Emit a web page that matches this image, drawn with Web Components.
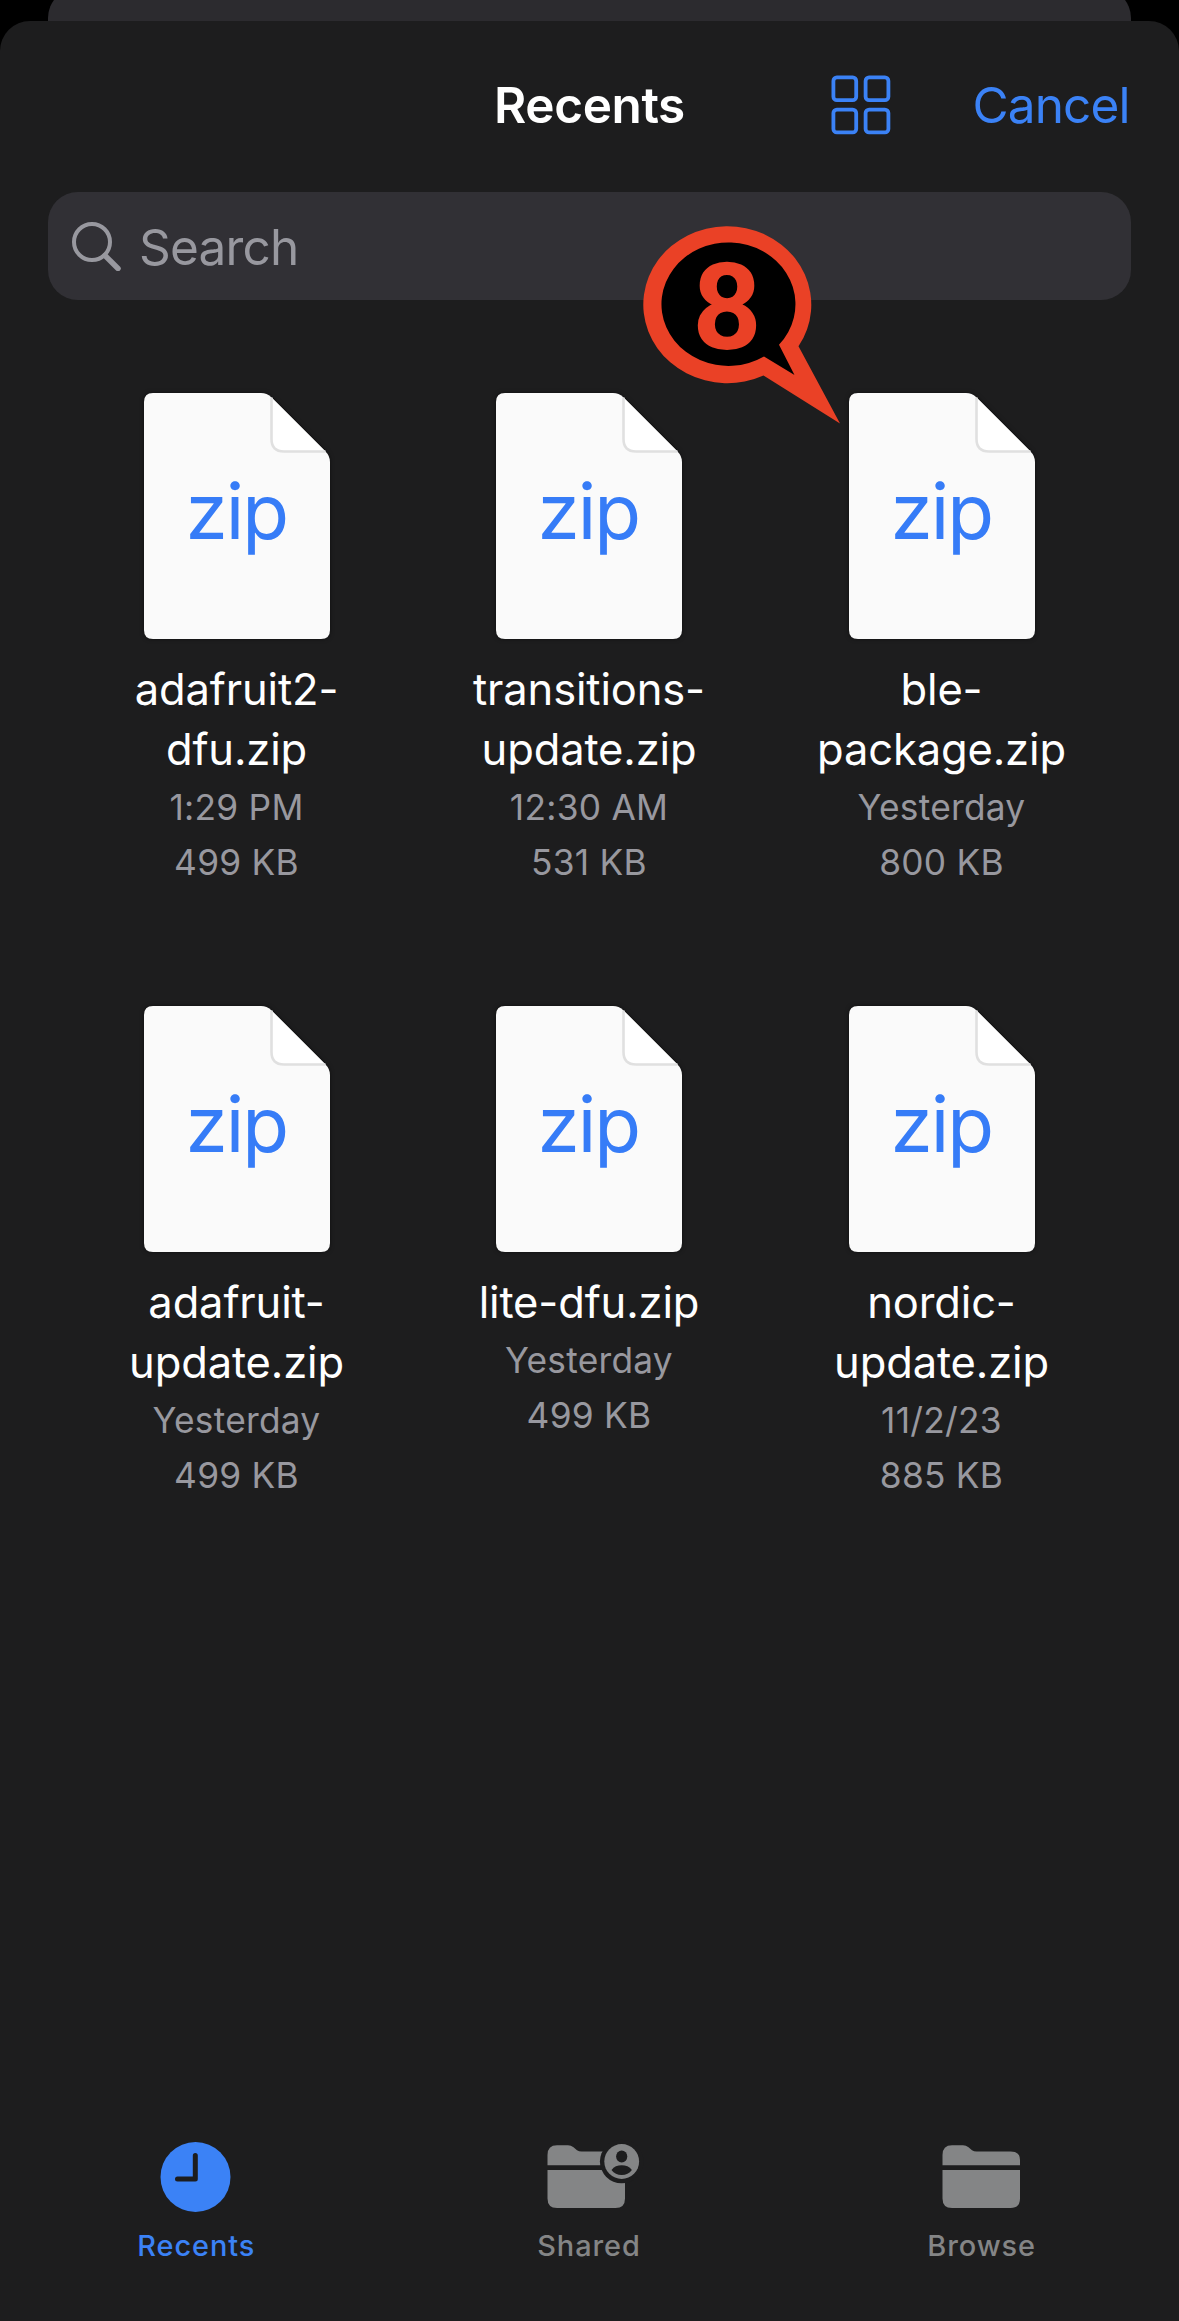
<!DOCTYPE html>
<html lang="en">
<head>
<meta charset="utf-8">
<title>Recents</title>
<style>
html, body { margin: 0; height: 100%; background: #000; }
body { font-family: Inter, "Liberation Sans", sans-serif; color: #fff; overflow: hidden; }
</style>
</head>
<body>
<file-picker>
  <nav-header slot="header" heading="Recents" action="Cancel"></nav-header>
  <search-field slot="header" label="Search"></search-field>
  <file-item name="adafruit2-dfu.zip" date="1:29 PM" size="499 KB"></file-item>
  <file-item name="transitions-update.zip" date="12:30 AM" size="531 KB"></file-item>
  <file-item name="ble-package.zip" date="Yesterday" size="800 KB"></file-item>
  <file-item name="adafruit-update.zip" date="Yesterday" size="499 KB"></file-item>
  <file-item name="lite-dfu.zip" date="Yesterday" size="499 KB"></file-item>
  <file-item name="nordic-update.zip" date="11/2/23" size="885 KB"></file-item>
  <tab-item slot="tabs" active label="Recents">
    <svg width="94" height="70" viewBox="0 0 94 70"><circle cx="46.5" cy="35" r="35" fill="currentColor"/><path d="M46.3 13.5V37H28.5" fill="none" stroke="#1d1d1e" stroke-width="5" stroke-linecap="round" stroke-linejoin="round"/></svg>
  </tab-item>
  <tab-item slot="tabs" label="Shared">
    <svg width="94" height="70" viewBox="0 0 94 70" style="overflow:visible"><path fill="currentColor" d="M5.500 23.300V13Q5.500 3.300 15 3.300H26Q29 3.300 31.500 5.200L35 8.200Q37 9.500 39.500 9.500H73.500Q83 9.500 83 18V23.300ZM5.500 28H83V56.500Q83 66 73.500 66H15Q5.500 66 5.500 56.500Z"/><circle cx="79.700" cy="19.500" r="21.800" fill="#1d1d1e"/><circle cx="79.700" cy="19.500" r="17.400" fill="currentColor"/><ellipse cx="79.700" cy="14.500" rx="5.600" ry="6" fill="#1d1d1e"/><path d="M69.500 28C72 24.500 75.500 23.300 79.700 23.300S87.400 24.500 89.900 28C87.400 31.500 84 33 79.700 33S72 31.500 69.500 28Z" fill="#1d1d1e"/></svg>
  </tab-item>
  <tab-item slot="tabs" label="Browse">
    <svg width="94" height="70" viewBox="0 0 94 70"><path fill="currentColor" d="M7.500 23.300V13Q7.500 3.300 17 3.300H28Q31 3.300 33.500 5.200L37 8.200Q39 9.500 41.500 9.500H75.500Q85 9.500 85 18V23.300ZM7.500 28H85V56.500Q85 66 75.500 66H17Q7.500 66 7.500 56.500Z"/></svg>
  </tab-item>
  <step-callout slot="overlay" number="8"></step-callout>
</file-picker>

<script>
class Base extends HTMLElement {
  connectedCallback() {
    if (this.shadowRoot) return;
    this.attachShadow({ mode: 'open' }).innerHTML = this.render();
  }
  get(name) { return this.getAttribute(name) || ''; }
}

customElements.define('file-picker', class extends Base {
  render() {
    return `<style>
      :host { display: flex; flex-direction: column; position: relative; width: 1179px; height: 2321px; background: #000; overflow: hidden; }
      .behind { height: 21px; margin: 0 48px; overflow: hidden; flex: none; }
      .behind div { height: 80px; margin-top: -12px; background: #2c2b2f; border-radius: 30px; }
      .sheet { flex: 1; display: flex; flex-direction: column; background: #1d1d1e; border-radius: 30px 30px 0 0; }
      .files { display: grid; grid-template-columns: repeat(3, 352.5px); grid-auto-rows: 612.500px; justify-content: center; padding: 93px 1px 0 0; flex: 1; align-content: start; }
      .tabs { display: grid; grid-template-columns: repeat(3, 1fr); height: 179px; margin-right: 1px; flex: none; }
    </style>
    <div class="behind"><div></div></div>
    <div class="sheet">
      <slot name="header"></slot>
      <div class="files"><slot></slot></div>
      <div class="tabs"><slot name="tabs"></slot></div>
    </div>
    <slot name="overlay"></slot>`;
  }
});

customElements.define('nav-header', class extends Base {
  render() {
    return `<style>
      :host { display: grid; grid-template-columns: 1fr auto 1fr; align-items: center; height: 168px; padding: 0 48px; flex: none; }
      h1 { grid-column: 2; margin: 0; font-size: 49.5px; font-weight: 600; letter-spacing: -0.4px; line-height: 60px; }
      .actions { display: flex; justify-content: flex-end; align-items: center; gap: 81.500px; padding-right: 1.500px; color: #3b82f6; }
      svg { display: block; }
      span { font-size: 49.5px; line-height: 60px; letter-spacing: -0.9px; }
    </style>
    <h1>${this.get('heading')}</h1>
    <div class="actions">
      <svg width="60" height="60" viewBox="0 0 60 60" fill="none" stroke="currentColor" stroke-width="3.8"><rect x="2.400" y="2.400" width="22.800" height="22.800" rx="3.500"/><rect x="34.600" y="2.400" width="22.800" height="22.800" rx="3.500"/><rect x="2.400" y="34.600" width="22.800" height="22.800" rx="3.500"/><rect x="34.600" y="34.600" width="22.800" height="22.800" rx="3.500"/></svg>
      <span>${this.get('action')}</span>
    </div>`;
  }
});

customElements.define('search-field', class extends Base {
  render() {
    return `<style>
      :host { display: flex; align-items: center; gap: 18px; height: 108px; margin: 3px 48px 0; padding-left: 23px; box-sizing: border-box; background: #313035; border-radius: 30px; color: #98989f; flex: none; }
      span { font-size: 49.5px; line-height: 60px; letter-spacing: -0.8px; padding-top: 1.500px; }
    </style>
    <svg width="50" height="50" viewBox="0 0 50 50" fill="none" stroke="currentColor"><circle cx="21" cy="21" r="18" stroke-width="4"/><path d="M34 34.500L47 47.500" stroke-width="5.400" stroke-linecap="round"/></svg>
    <span>${this.get('label')}</span>`;
  }
});

customElements.define('file-item', class extends Base {
  render() {
    return `<style>
      :host { display: flex; flex-direction: column; align-items: center; text-align: center; }
      svg { display: block; overflow: visible; filter: drop-shadow(0 0 2px rgba(0,0,0,.5)); }
      .name { width: 270px; margin: 20px 0 1px; font-size: 43.5px; line-height: 60px; letter-spacing: -0.15px; }
      .meta { font-size: 35.3px; line-height: 55px; letter-spacing: 0.25px; color: #98989f; }
    </style>
    <svg width="186" height="246" viewBox="0 0 186 246">
      <path d="M9 0H117Q123 0 127 4L181.500 58.500Q186 63 186 69V237Q186 246 177 246H9Q0 246 0 237V9Q0 0 9 0Z" fill="#fafafa"/>
      <path d="M127.500 4.500L181.500 58.500H140Q127.500 58.500 127.500 46Z" fill="#fff"/>
      <path d="M127.500 4.500V46Q127.500 58.500 140 58.500H181.500" fill="none" stroke="#e0e0e0" stroke-width="2.600"/>
      <text x="92.300" y="146.300" text-anchor="middle" font-size="76.500" letter-spacing="-2" fill="#367cf7">zip</text>
    </svg>
    <div class="name">${this.get('name')}</div>
    <div class="meta">${this.get('date')}</div>
    <div class="meta">${this.get('size')}</div>`;
  }
});

customElements.define('tab-item', class extends Base {
  render() {
    return `<style>
      :host { display: flex; flex-direction: column; align-items: center; color: #848586; }
      :host([active]) { color: #3b82f6; }
      span { margin-top: 15px; font-size: 28.900px; font-weight: 500; line-height: 37px; letter-spacing: 0.95px; }
    </style>
    <slot></slot><span>${this.get('label')}</span>`;
  }
});

customElements.define('step-callout', class extends Base {
  render() {
    return `<style>
      :host { display: block; position: absolute; left: 640px; top: 220px; }
      svg { display: block; }
      text { font: bold 121px Roboto, "Liberation Sans", sans-serif; }
    </style>
    <svg width="204" height="206" viewBox="640 220 204 206">
      <path fill="#ea4126" d="M763.500 375.500A84 78.500 0 1 1 798.500 346.300L840 423.500Z"/>
      <path fill="#000" d="M764 356.500A67 61.700 0 1 1 779 344.700L794.500 375Z"/>
      <text x="727" y="349" text-anchor="middle" fill="#ea4126">${this.get('number')}</text>
    </svg>`;
  }
});
</script>
</body>
</html>
